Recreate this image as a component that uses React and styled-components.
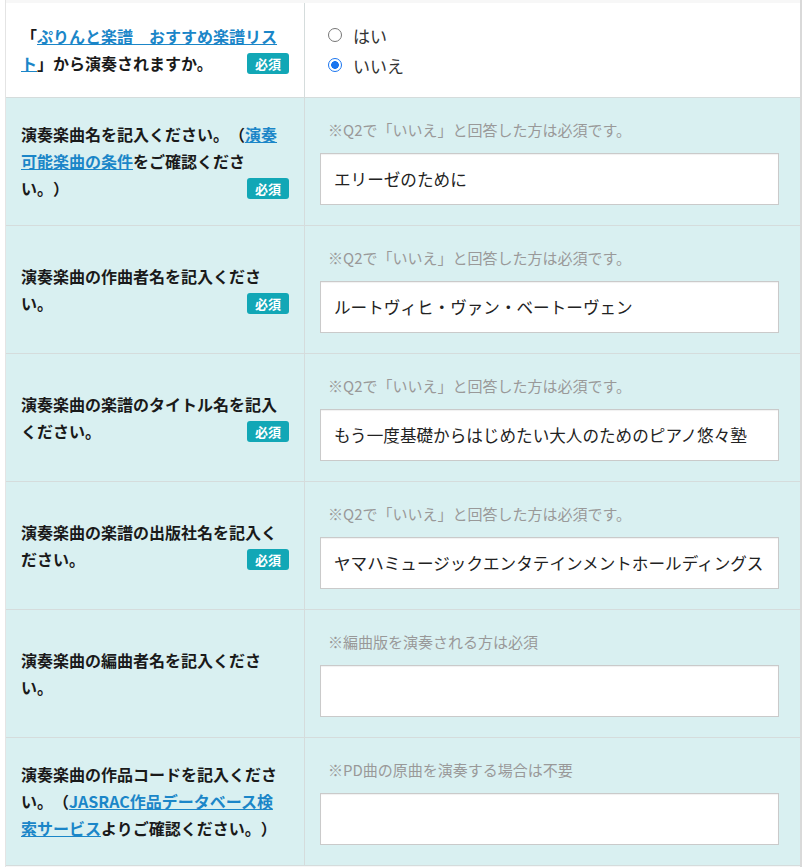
import React from 'react';
import styled, { createGlobalStyle } from 'styled-components';

const GlobalStyle = createGlobalStyle`
  html, body {
    margin: 0;
    padding: 0;
    background: #fff;
  }
  body {
    font-family: "Noto Sans CJK JP", "Noto Sans", sans-serif;
    color: #222;
    text-spacing-trim: space-all;
  }
`;

const Table = styled.div`
  margin-left: 5px;
  width: 797px;
  box-sizing: border-box;
  border-left: 1px solid #e4e4e4;
  border-right: 2px solid #d9d9d9;
`;

const Edge = styled.div`
  height: ${props => props.$h}px;
  background-color: #f7f7f7;
`;

const Row = styled.div`
  display: grid;
  grid-template-columns: 299px 1fr;
  background-color: ${props => (props.$white ? '#fff' : '#d9f0f1')};
  border-bottom: 1px solid #d5dcdc;
`;

const Head = styled.div`
  display: flex;
  align-items: center;
  padding: 0 16px 0 15px;
  border-right: 1px solid #d5dcdc;
`;

const Label = styled.div`
  display: flow-root;
  width: 100%;
  font-size: 16px;
  font-weight: bold;
  line-height: 27px;
  color: #1a1a1a;

  & a {
    color: #1b86c8;
    text-decoration: underline;
  }
`;

const Badge = styled.span`
  float: right;
  margin-top: 3px;
  margin-right: -1px;
  height: 21px;
  padding: 0 8px;
  border-radius: 3px;
  background-color: #12a7b6;
  color: #fff;
  font-size: 13px;
  font-weight: bold;
  line-height: 21px;
`;

const Body = styled.div`
  padding: ${props => (props.$radio ? '17px 21px 17px 15px' : '20px 21px 20px 15px')};
`;

const Note = styled.p`
  margin: 0 0 11px;
  padding-left: 8px;
  font-size: 15px;
  line-height: 24px;
  color: #999;
`;

const Input = styled.input`
  display: block;
  width: 100%;
  height: 52px;
  box-sizing: border-box;
  margin: 0;
  padding: 0 13px;
  border: 1px solid #cacaca;
  border-radius: 0;
  background: #fff;
  box-shadow: inset 0 1px 1px rgba(0, 0, 0, 0.06);
  font-family: "Noto Sans CJK JP", sans-serif;
  font-size: 16.6px;
  color: #222;
  outline: none;
`;

const RadioGroup = styled.div`
  display: flex;
  flex-direction: column;
  padding-left: 8px;
`;

const Choice = styled.label`
  display: flex;
  align-items: center;
  gap: 10px;
  height: 30px;
  font-size: 17px;
  color: #333;
`;

const Radio = styled.input`
  appearance: none;
  flex: none;
  width: 14px;
  height: 14px;
  box-sizing: border-box;
  margin: 0 1px 0 0;
  border: 1.5px solid #767676;
  border-radius: 50%;
  background: #fff;

  &:checked {
    border-color: #1a75ef;
    background: radial-gradient(circle, #1a75ef 0 3.6px, #fff 4.1px);
  }
`;

const rows = [
  {
    label: <>演奏楽曲名を記入ください。（<a href="#">演奏可能楽曲の条件</a>をご確認ください。）</>,
    note: '※Q2で「いいえ」と回答した方は必須です。',
    value: 'エリーゼのために',
    required: true,
  },
  {
    label: '演奏楽曲の作曲者名を記入ください。',
    note: '※Q2で「いいえ」と回答した方は必須です。',
    value: 'ルートヴィヒ・ヴァン・ベートーヴェン',
    required: true,
  },
  {
    label: '演奏楽曲の楽譜のタイトル名を記入ください。',
    note: '※Q2で「いいえ」と回答した方は必須です。',
    value: 'もう一度基礎からはじめたい大人のためのピアノ悠々塾',
    required: true,
  },
  {
    label: '演奏楽曲の楽譜の出版社名を記入ください。',
    note: '※Q2で「いいえ」と回答した方は必須です。',
    value: 'ヤマハミュージックエンタテインメントホールディングス',
    required: true,
  },
  {
    label: '演奏楽曲の編曲者名を記入ください。',
    note: '※編曲版を演奏される方は必須',
    value: '',
  },
  {
    label: <>演奏楽曲の作品コードを記入ください。（<a href="#">JASRAC作品データベース検索サービス</a>よりご確認ください。）</>,
    note: '※PD曲の原曲を演奏する場合は不要',
    value: '',
  },
];

export default function App() {
  return (
    <>
      <GlobalStyle />
      <Table>
        <Edge $h={3} />
        <Row $white>
          <Head>
            <Label>
              「<a href="#">ぷりんと楽譜　おすすめ楽譜リスト</a>」から演奏されますか。
              <Badge>必須</Badge>
            </Label>
          </Head>
          <Body $radio>
            <RadioGroup>
              <Choice>
                <Radio type="radio" name="q2" />
                はい
              </Choice>
              <Choice>
                <Radio type="radio" name="q2" defaultChecked />
                いいえ
              </Choice>
            </RadioGroup>
          </Body>
        </Row>
        {rows.map((row, i) => (
          <Row key={i}>
            <Head>
              <Label>
                {row.label}
                {row.required && <Badge>必須</Badge>}
              </Label>
            </Head>
            <Body>
              <Note>{row.note}</Note>
              <Input type="text" defaultValue={row.value} />
            </Body>
          </Row>
        ))}
        <Edge $h={8} />
      </Table>
    </>
  );
}
